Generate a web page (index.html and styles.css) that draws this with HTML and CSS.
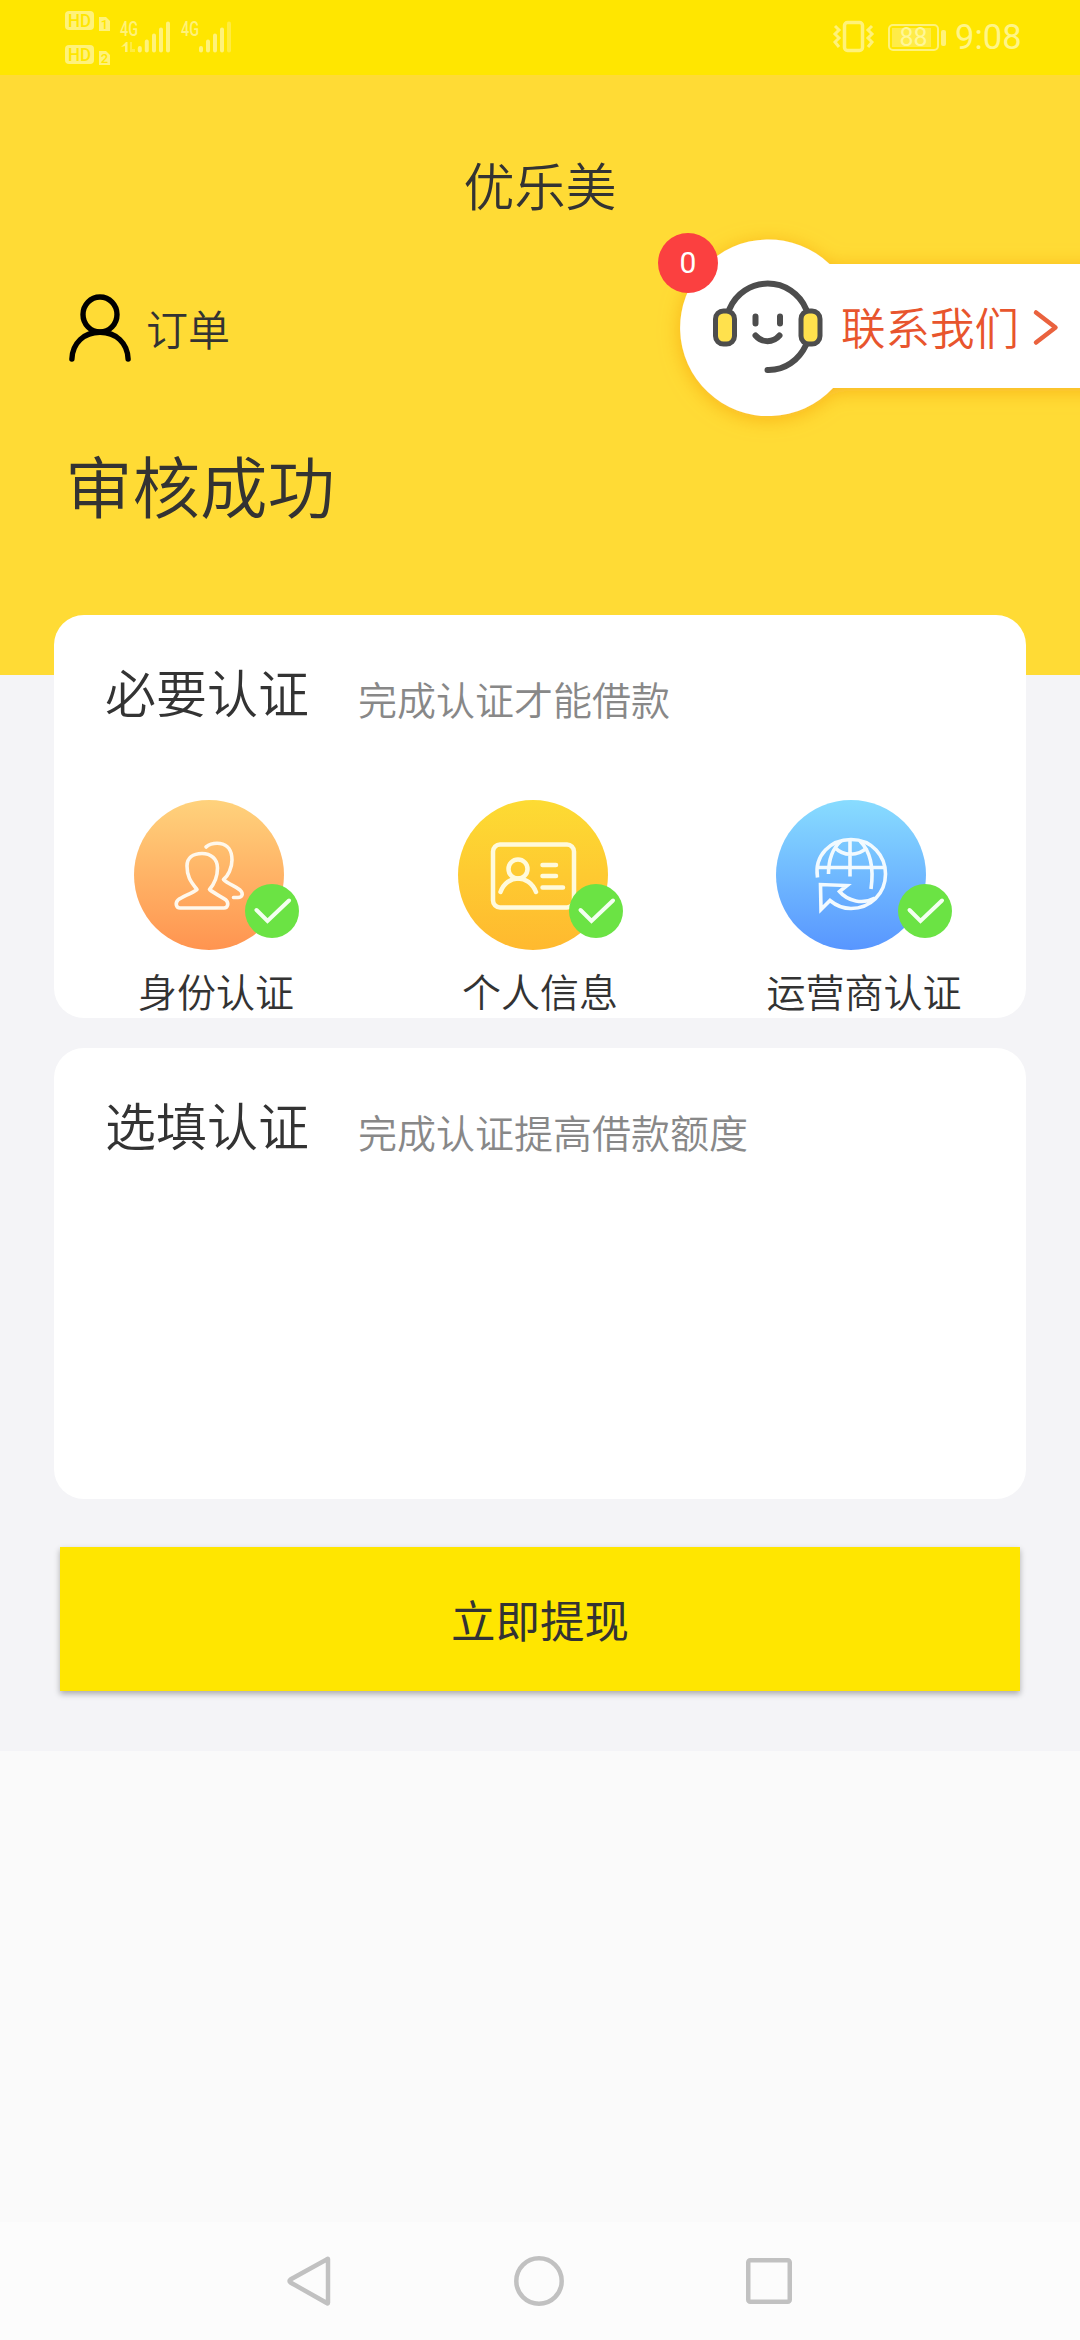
FILE: index.html
```html
<!DOCTYPE html>
<html lang="zh-CN">
<head>
<meta charset="utf-8">
<title>优乐美</title>
<link rel="stylesheet" href="styles.css">
</head>
<body>
<div class="statusbar">
  <svg class="signals" width="170" height="75" viewBox="65 0 170 75">
    <rect class="lit" x="65" y="11" width="29" height="19" rx="4"/>
    <rect class="lit" x="65" y="45" width="29" height="19" rx="4"/>
    <text class="hd" x="68" y="27" textLength="23" lengthAdjust="spacingAndGlyphs">HD</text>
    <text class="hd" x="68" y="61" textLength="23" lengthAdjust="spacingAndGlyphs">HD</text>
    <path class="lit" d="M99 17h7l4 4v10H99zM99 51h7l4 4v10H99z"/>
    <text class="sim" x="104.500" y="29" text-anchor="middle">1</text>
    <text class="sim" x="104.500" y="63" text-anchor="middle">2</text>
    <text class="net" x="120" y="36" textLength="18" lengthAdjust="spacingAndGlyphs">4G</text>
    <text class="net" x="181" y="36" textLength="18" lengthAdjust="spacingAndGlyphs">4G</text>
    <path class="lit" d="M121 47l5-5h1.500v10H125v-6z"/>
    <path class="dim" d="M130 42h2v7h3v3h-5z"/>
    <g class="bars">
      <path d="M139.800 50.500v-2.500M146.800 50.500v-9M154 50.500v-15M161 50.500v-21M168 50.500v-27"/>
      <path d="M201 50.500v-2.500M208 50.500v-9M215 50.500v-15M222 50.500v-21"/>
      <path class="weak" d="M229 50.500v-27"/>
    </g>
  </svg>
  <div class="status-right">
    <svg width="115" height="75" viewBox="831 0 115 75">
      <rect class="line" x="843.500" y="22.500" width="18" height="28" rx="3" stroke-width="3.500"/>
      <path class="line" d="M834 26l4 4-4 4 4 4-4 4 4 5M871 26l-4 4 4 4-4 4 4 4-4 5" stroke-width="3"/>
      <rect class="line thin" x="888" y="25" width="49" height="25" rx="4"/>
      <rect class="charge" x="891" y="28" width="39" height="19"/>
      <rect class="lit" x="940" y="30" width="5" height="16" rx="2"/>
      <text class="level" x="912.500" y="46" text-anchor="middle" textLength="28">88</text>
    </svg>
    <span class="clock">9:08</span>
  </div>
</div>

<header class="hero">
  <h1 class="title">优乐美</h1>
  <div class="order">
    <svg width="62" height="68" viewBox="0 0 62 68" fill="none" stroke="#000" stroke-width="5.400" stroke-linecap="round">
      <ellipse cx="31" cy="20.500" rx="17" ry="17.500"/>
      <path d="M2.900 65C3.500 49 15 38.300 31 38.300S58.500 49 59.100 65"/>
    </svg>
    <span>订单</span>
  </div>
  <h2 class="state">审核成功</h2>
</header>

<div class="contact">
  <svg class="bubble" width="460" height="240" viewBox="620 220 460 240">
    <defs>
      <filter id="glow" x="-20%" y="-20%" width="140%" height="140%">
        <feDropShadow dx="0" dy="3" stdDeviation="10" flood-color="#f59b14" flood-opacity=".6"/>
      </filter>
    </defs>
    <path filter="url(#glow)" fill="#fff" d="M829.500 264H1120V388H833A88.300 88.300 0 1 1 829.500 264z"/>
    <g fill="none" stroke="#4d4d4d" stroke-width="6" stroke-linecap="round">
      <path d="M729.500 309A41.500 41.500 0 0 1 806 309M806 345C799 360 785 370.500 767.500 370"/>
      <path d="M755.500 316.500v7M780 316.500v7M755.500 335.500C762 343 773 343 779.500 335.500"/>
      <rect x="715.500" y="311" width="19" height="33" rx="8" fill="#ffe14d" stroke-width="5"/>
      <rect x="801" y="311" width="19" height="33" rx="8" fill="#ffe14d" stroke-width="5"/>
    </g>
    <path d="M1036 312.500L1055.500 327.500L1036 342.500" fill="none" stroke="#ea623e" stroke-width="4.500" stroke-linecap="round" stroke-linejoin="round"/>
  </svg>
  <span class="contact-text">联系我们</span>
  <span class="badge">0</span>
</div>

<main class="content">
  <section class="card required">
    <div class="card-head"><h3>必要认证</h3><p>完成认证才能借款</p></div>
    <div class="items">
      <div class="item">
        <svg width="165" height="150" viewBox="0 0 165 150">
          <defs><linearGradient id="orange" x2="0" y2="1"><stop offset="0" stop-color="#ffd27c"/><stop offset="1" stop-color="#ff9450"/></linearGradient></defs>
          <circle cx="75" cy="75" r="75" fill="url(#orange)"/>
          <g class="glyph">
            <path d="M63 89.500C56 81 53 76 53 66C53 58 59 53.500 68 53.500S83.500 59 83.500 68C83.500 77 81 83 75.500 89.500C81 94 88 97 92 100C95 103 94 108 90 108H46C42 108 41 103 44 100C48 96.500 57 94 63 89.500z"/>
            <path d="M72 47C77 43 82 43 86 43.500C94 44.500 98 51 98 60C98 68 94 76 89.500 79.500C94 84 101 86 106 90C110 94 108 97.500 104 97.500H99.500"/>
          </g>
          <circle cx="138" cy="111" r="27" fill="#6be344"/>
          <path class="tick" d="M122.500 110L133.500 121L155 100.500"/>
        </svg>
        <span>身份认证</span>
      </div>
      <div class="item">
        <svg width="165" height="150" viewBox="0 0 165 150">
          <defs><linearGradient id="gold" x2="0" y2="1"><stop offset="0" stop-color="#fddb33"/><stop offset="1" stop-color="#ffb92f"/></linearGradient></defs>
          <circle cx="75" cy="75" r="75" fill="url(#gold)"/>
          <g class="glyph gold">
            <rect x="35" y="44.500" width="81" height="63" rx="7"/>
            <circle cx="60" cy="69" r="9.500"/>
            <path d="M42.500 92C49 74 71 74 78 92"/>
            <path d="M84.500 65H98M84.500 76H98M84.500 87.500H105"/>
          </g>
          <circle cx="138" cy="111" r="27" fill="#6be344"/>
          <path class="tick" d="M122.500 110L133.500 121L155 100.500"/>
        </svg>
        <span>个人信息</span>
      </div>
      <div class="item">
        <svg width="176" height="150" viewBox="0 0 176 150">
          <defs><linearGradient id="blue" x2="0" y2="1"><stop offset="0" stop-color="#88dcff"/><stop offset="1" stop-color="#5896ff"/></linearGradient></defs>
          <circle cx="75" cy="75" r="75" fill="url(#blue)"/>
          <g class="glyph globe">
            <path d="M41.500 77.500C38 55 55 39.500 75 39.500C96 39.500 109.500 56 109.500 74C109.500 94 94 108.500 75 108.500C67 108.500 60 105.500 54 100.500L45 109.500L44.500 84.500L71 85.500L63.500 91.500C72 101.500 87 104.500 99 98"/>
            <path d="M42 67.500H108M74 40V76.500M52.500 74C52.500 60 57 48 65 41M84 41C94 51 98 68 95 89M59 47.500C67 56.500 82 56.500 91 47.500"/>
          </g>
          <circle cx="149" cy="111" r="27" fill="#6be344"/>
          <path class="tick" d="M133.500 110L144.500 121L166 100.500"/>
        </svg>
        <span>运营商认证</span>
      </div>
    </div>
  </section>
  <section class="card optional">
    <div class="card-head"><h3>选填认证</h3><p>完成认证提高借款额度</p></div>
  </section>
  <button class="withdraw" type="button">立即提现</button>
</main>

<nav class="navbar">
  <svg width="44" height="54" viewBox="0 0 44 54"><path d="M39.700 5.500Q41 4 41 5.500V48.500Q41 50 39.700 49L3.500 28.500Q1.500 27 3.500 25.500z"/></svg>
  <svg width="50" height="54" viewBox="0 0 50 54"><circle cx="25" cy="27" r="22.700"/></svg>
  <svg width="46" height="54" viewBox="0 0 46 54"><rect x="2.250" y="6.250" width="41.500" height="41.500" rx="2"/></svg>
</nav>
</body>
</html>
```

FILE: styles.css
```css
* { box-sizing: border-box; margin: 0; padding: 0; }

body {
  position: relative;
  display: flex;
  flex-direction: column;
  width: 1080px;
  height: 2340px;
  overflow: hidden;
  background: #fafafa;
  color: #333;
  font-family: "Noto Sans CJK SC", sans-serif;
  font-weight: 350;
}

svg { display: block; flex: none; }
h1, h2, h3 { font-weight: inherit; }

.statusbar {
  display: flex;
  justify-content: space-between;
  height: 75px;
  padding: 0 59px 0 65px;
  background: #ffe600;
}
.status-right { display: flex; align-items: center; gap: 8px; }
.lit { fill: #fff27a; }
.dim { fill: #ffec40; }
.line { fill: none; stroke: #fff27a; }
.thin { stroke-width: 2; }
.charge { fill: #ffec48; }
.bars { fill: none; stroke: #fff27a; stroke-width: 4; stroke-linecap: round; }
.weak { stroke: #ffec40; }
.hd, .sim, .net, .level { font-family: Roboto, sans-serif; font-weight: 500; }
.hd { font-size: 18px; fill: #ffe600; }
.sim { font-size: 13px; fill: #ffe600; }
.net { font-size: 20px; fill: #fff27a; }
.level { font-size: 25px; font-weight: 400; fill: #fff799; }
.clock {
  width: 66px;
  color: #fff588;
  font: 400 34.500px/75px Roboto, sans-serif;
  white-space: nowrap;
}

.hero { height: 600px; padding: 73px 65px 0; background: #ffdb35; }
.title { font-size: 51px; line-height: 72px; text-align: center; }
.order {
  display: flex;
  align-items: center;
  gap: 15px;
  height: 70px;
  margin-top: 73px;
  padding-left: 4px;
  font-size: 42px;
  line-height: 60px;
}
.state { margin-top: 71px; font-size: 67.500px; line-height: 100px; }

.contact { position: absolute; top: 220px; left: 620px; width: 460px; height: 240px; }
.contact-text {
  position: absolute;
  top: 74px;
  left: 221px;
  color: #e8552d;
  font-size: 44.500px;
  line-height: 64px;
}
.badge {
  position: absolute;
  top: 13px;
  left: 38px;
  width: 60px;
  height: 60px;
  border-radius: 50%;
  background: #fb4040;
  color: #fff;
  font: 400 30px/60px Roboto, sans-serif;
  text-align: center;
}

.content {
  display: flex;
  flex-direction: column;
  height: 1076px;
  padding: 0 54px;
  background: #f4f4f7;
}
.card { flex: none; overflow: hidden; border-radius: 30px; background: #fff; }
.required { height: 403px; margin-top: -60px; }
.optional { height: 451px; margin-top: 30px; }
.card-head {
  display: flex;
  align-items: center;
  gap: 49px;
  height: 152px;
  padding-left: 51px;
}
.card-head h3 { font-size: 51px; line-height: 72px; }
.card-head p { padding-top: 14px; color: #888; font-size: 39px; line-height: 56px; }
.items { display: grid; grid-template-columns: repeat(3, 1fr); padding-top: 33px; }
.item {
  display: flex;
  flex-direction: column;
  align-items: center;
  gap: 15px;
  font-size: 39px;
  line-height: 51px;
}
.glyph { fill: none; stroke: #fff8ec; stroke-width: 3.600; stroke-linecap: round; stroke-linejoin: round; }
.gold { stroke: #fffadb; stroke-width: 4.500; }
.globe { stroke: #f2faff; stroke-linecap: butt; stroke-linejoin: miter; }
.tick { fill: none; stroke: #f4fff0; stroke-width: 4; stroke-linecap: round; }

.withdraw {
  flex: none;
  height: 144px;
  margin: 48px 6px 0;
  border: 0;
  background: #ffe600;
  box-shadow: 0 3px 6px rgba(0, 0, 0, .3);
  color: #333;
  font: 400 44.500px/64px "Noto Sans CJK SC", sans-serif;
}

.navbar {
  display: flex;
  justify-content: space-between;
  align-items: center;
  height: 118px;
  margin-top: auto;
  padding: 0 288px 0 287px;
  background: #fcfcfc;
}
.navbar svg { fill: none; stroke: #c1c1c1; stroke-width: 4.500; }
```
